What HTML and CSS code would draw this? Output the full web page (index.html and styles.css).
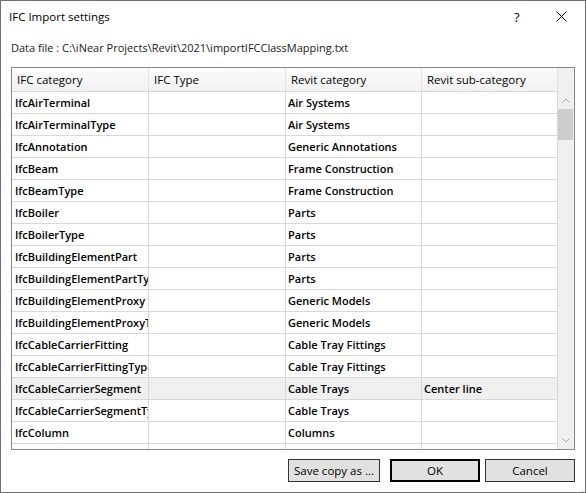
FILE: index.html
```html
<!DOCTYPE html>
<html lang="en">
<head>
    <meta charset="UTF-8">
    <title>IFC Import settings</title>
    <link rel="stylesheet" href="styles.css">
</head>
<body>
<div class="window">
    <!-- title bar -->
    <div class="titlebar">
        <span class="caption">IFC Import settings</span>
        <span class="help">?</span>
        <span class="close">
            <svg width="11" height="11" viewBox="0 0 11 11"><path d="M0.5 0.5 L10.5 10.5 M10.5 0.5 L0.5 10.5" stroke="#000" stroke-width="1"/></svg>
        </span>
    </div>

    <div class="content">
        <div class="datafile">Data file : C:\iNear Projects\Revit\2021\importIFCClassMapping.txt</div>

        <div class="grid">
            <div class="grid-body">
                <div class="row head">
                    <div class="cell">IFC category</div>
                    <div class="cell">IFC Type</div>
                    <div class="cell">Revit category</div>
                    <div class="cell">Revit sub-category</div>
                </div>
                <div class="row"><div class="cell">IfcAirTerminal</div><div class="cell"></div><div class="cell">Air Systems</div><div class="cell"></div></div>
                <div class="row"><div class="cell">IfcAirTerminalType</div><div class="cell"></div><div class="cell">Air Systems</div><div class="cell"></div></div>
                <div class="row"><div class="cell">IfcAnnotation</div><div class="cell"></div><div class="cell">Generic Annotations</div><div class="cell"></div></div>
                <div class="row"><div class="cell">IfcBeam</div><div class="cell"></div><div class="cell">Frame Construction</div><div class="cell"></div></div>
                <div class="row"><div class="cell">IfcBeamType</div><div class="cell"></div><div class="cell">Frame Construction</div><div class="cell"></div></div>
                <div class="row"><div class="cell">IfcBoiler</div><div class="cell"></div><div class="cell">Parts</div><div class="cell"></div></div>
                <div class="row"><div class="cell">IfcBoilerType</div><div class="cell"></div><div class="cell">Parts</div><div class="cell"></div></div>
                <div class="row"><div class="cell">IfcBuildingElementPart</div><div class="cell"></div><div class="cell">Parts</div><div class="cell"></div></div>
                <div class="row"><div class="cell">IfcBuildingElementPartType</div><div class="cell"></div><div class="cell">Parts</div><div class="cell"></div></div>
                <div class="row"><div class="cell">IfcBuildingElementProxy</div><div class="cell"></div><div class="cell">Generic Models</div><div class="cell"></div></div>
                <div class="row"><div class="cell">IfcBuildingElementProxyType</div><div class="cell"></div><div class="cell">Generic Models</div><div class="cell"></div></div>
                <div class="row"><div class="cell">IfcCableCarrierFitting</div><div class="cell"></div><div class="cell">Cable Tray Fittings</div><div class="cell"></div></div>
                <div class="row"><div class="cell">IfcCableCarrierFittingType</div><div class="cell"></div><div class="cell">Cable Tray Fittings</div><div class="cell"></div></div>
                <div class="row selected"><div class="cell">IfcCableCarrierSegment</div><div class="cell"></div><div class="cell">Cable Trays</div><div class="cell">Center line</div></div>
                <div class="row"><div class="cell">IfcCableCarrierSegmentType</div><div class="cell"></div><div class="cell">Cable Trays</div><div class="cell"></div></div>
                <div class="row"><div class="cell">IfcColumn</div><div class="cell"></div><div class="cell">Columns</div><div class="cell"></div></div>
                <div class="row"><div class="cell"></div><div class="cell"></div><div class="cell"></div><div class="cell"></div></div>
            </div>
            <!-- vertical scrollbar -->
            <div class="vscroll">
                <div class="corner"></div>
                <div class="arrow">
                    <svg width="8" height="5" viewBox="0 0 8 5"><path d="M0.5 4.5 L4 1 L7.5 4.5" fill="none" stroke="#a0a0a0" stroke-width="1"/></svg>
                </div>
                <div class="track">
                    <div class="thumb"></div>
                </div>
                <div class="arrow">
                    <svg width="8" height="5" viewBox="0 0 8 5"><path d="M0.5 0.5 L4 4 L7.5 0.5" fill="none" stroke="#a0a0a0" stroke-width="1"/></svg>
                </div>
            </div>
        </div>

        <div class="buttons">
            <button class="btn save">Save copy as ...</button>
            <button class="btn ok">OK</button>
            <button class="btn cancel">Cancel</button>
        </div>
    </div>

    <div class="grip">
        <svg width="9" height="9" viewBox="0 0 9 9">
            <rect x="7" y="1" width="1" height="1" fill="#b8b8b8"/>
            <rect x="5" y="3" width="1" height="1" fill="#b8b8b8"/>
            <rect x="7" y="3" width="1" height="1" fill="#b8b8b8"/>
            <rect x="3" y="5" width="1" height="1" fill="#b8b8b8"/>
            <rect x="5" y="5" width="1" height="1" fill="#b8b8b8"/>
            <rect x="7" y="5" width="1" height="1" fill="#b8b8b8"/>
            <rect x="1" y="7" width="1" height="1" fill="#b8b8b8"/>
            <rect x="3" y="7" width="1" height="1" fill="#b8b8b8"/>
            <rect x="5" y="7" width="1" height="1" fill="#b8b8b8"/>
            <rect x="7" y="7" width="1" height="1" fill="#b8b8b8"/>
        </svg>
    </div>
</div>
</body>
</html>
```

FILE: styles.css
```css
* {
    margin: 0;
    padding: 0;
    box-sizing: border-box;
}
body {
    width: 586px;
    height: 493px;
    overflow: hidden;
    background: #fff;
    font-family: "Open Sans", "Liberation Sans", sans-serif;
    color: #000;
}
.window {
    position: relative;
    width: 586px;
    height: 493px;
    border: 1px solid #6f6f6f;
    background: #fff;
    display: flex;
    flex-direction: column;
}
.titlebar {
    height: 31px;
    display: flex;
    align-items: center;
    padding-left: 8px;
    font-size: 11.5px;
}
.caption {
    flex: 1;
}
.help {
    font-size: 13px;
    width: 10px;
    margin-right: 32px;
}
.close {
    width: 11px;
    height: 11px;
    margin-right: 18px;
    margin-top: -1px;
    display: flex;
}
.content {
    padding: 0 10px;
    display: flex;
    flex-direction: column;
}
.datafile {
    margin-top: 8px;
    height: 16px;
    line-height: 16px;
    font-size: 11px;
    color: #1a1a1a;
}
.grid {
    margin-top: 11px;
    height: 383px;
    border: 1px solid #828790;
    display: flex;
    overflow: hidden;
}
.grid-body {
    width: 546px;
    overflow: hidden;
}
.row {
    display: grid;
    grid-template-columns: 137px 137px 136px 136px;
    height: 22px;
    border-bottom: 1px solid #d8d8d8;
    font-size: 11px;
    font-weight: 600;
}
.row.head {
    height: 24px;
    font-weight: 400;
    font-size: 11.5px;
    background: linear-gradient(#fcfcfc, #f1f1f1);
    border-bottom: 1px solid #d5d5d5;
}
.row.selected {
    background: #f0f0f0;
}
.cell {
    border-right: 1px solid #d8d8d8;
    padding-left: 3px;
    line-height: 21px;
    white-space: nowrap;
    overflow: hidden;
}
.row .cell:nth-child(3),
.row .cell:nth-child(4) {
    padding-left: 2px;
}
.row.head .cell {
    padding-left: 5px;
    line-height: 23px;
    border-right-color: #e3e3e3;
}
.vscroll {
    width: 16px;
    background: #f0f0f0;
    display: flex;
    flex-direction: column;
}
.corner {
    height: 24px;
}
.arrow {
    height: 17px;
    display: flex;
    align-items: center;
    justify-content: center;
}
.track {
    flex: 1;
}
.thumb {
    height: 31px;
    margin: 0 1px 0 0;
    background: #cdcdcd;
}
.buttons {
    margin-top: 9px;
    display: flex;
    justify-content: flex-end;
}
.btn {
    height: 23px;
    font-family: "Open Sans", "Liberation Sans", sans-serif;
    font-size: 11.5px;
    color: #000;
    background: #e1e1e1;
    border: 1px solid #adadad;
}
.save {
    width: 92px;
    border-color: #333;
}
.ok {
    width: 90px;
    margin-left: 10px;
    border: 2px solid #000;
}
.cancel {
    width: 90px;
    margin-left: 5px;
    border-color: #333;
}
.grip {
    position: absolute;
    right: 1px;
    bottom: 1px;
    width: 9px;
    height: 9px;
}
```
